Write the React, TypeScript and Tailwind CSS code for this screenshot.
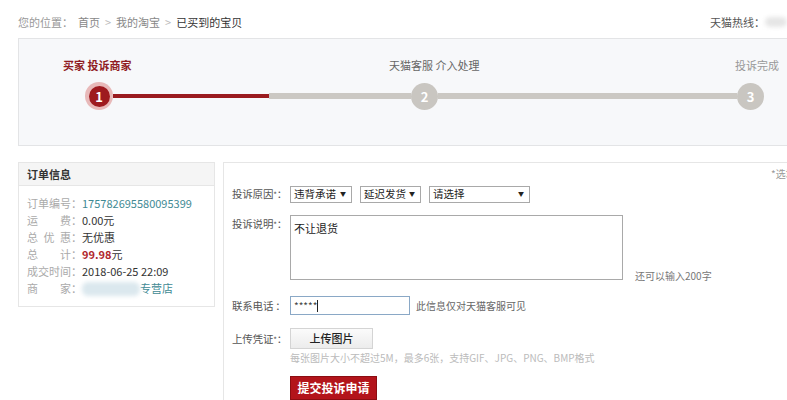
import { type ReactNode } from "react";

const FONT = { fontFamily: '"Noto Sans CJK SC", "Noto Sans", sans-serif' };

function Step({ n, active }: { n: number; active?: boolean }) {
  if (active) {
    return (
      <div className="size-[28px] shrink-0 rounded-full bg-[#e8b9b9] flex items-center justify-center">
        <div className="size-[21px] rounded-full bg-[#9e1a1f] text-white text-[13px] font-bold leading-none flex items-center justify-center">
          {n}
        </div>
      </div>
    );
  }
  return (
    <div className="size-[27px] shrink-0 rounded-full bg-[#c9c6c1] text-white text-[13px] font-bold leading-none flex items-center justify-center">
      {n}
    </div>
  );
}

function Select({ w, children }: { w: string; children: ReactNode }) {
  return (
    <div
      className={`${w} h-[17px] border border-[#a9a9a9] bg-white flex items-center justify-between whitespace-nowrap pl-[3px] pr-[5px] text-[10.5px] text-[#222] leading-none`}
    >
      <span>{children}</span>
      <span className="text-[6px]">▼</span>
    </div>
  );
}

function Label({ children }: { children: ReactNode }) {
  return (
    <div className="w-[58px] shrink-0 whitespace-nowrap text-[10.5px] text-[#555] leading-[17px] tracking-[-0.2px]">
      {children}
    </div>
  );
}

function InfoRow({ label, children }: { label: string; children: ReactNode }) {
  return (
    <div className="flex h-[17px] items-center text-[11px] leading-none whitespace-pre">
      <span className="w-[44px] text-[#aaa] [text-align-last:justify]">{label}</span>
      <span className="w-[11px] text-[#aaa]">：</span>
      {children}
    </div>
  );
}

export default function App() {
  return (
    <div className="w-[787px] h-[400px] overflow-hidden bg-white" style={FONT}>
      {/* breadcrumb */}
      <div className="flex items-center justify-between pl-[18px] pt-[14px] h-[30px] text-[11px] leading-none">
        <div className="flex items-center gap-[5px] text-[#888]">
          <span className="text-[#999]">您的位置：</span>
          <span>首页</span>
          <span className="text-[#bbb]">&gt;</span>
          <span>我的淘宝</span>
          <span className="text-[#bbb]">&gt;</span>
          <span className="text-[#333]">已买到的宝贝</span>
        </div>
        <div className="flex items-center text-[#555]">
          <span>天猫热线：</span>
          <span className="w-[22px] h-[10px] rounded-full bg-[#e6e6e6] blur-[2px]" />
        </div>
      </div>

      {/* progress */}
      <div className="ml-[18px] mt-[8px] w-[790px] h-[108px] border border-[#e3e4e6] bg-[#f7f8fa]">
        <div className="relative h-[43px] text-[11px] leading-none">
          <span className="absolute left-[44px] top-[21px] font-bold text-[#8f1b22]">买家 投诉商家</span>
          <span className="absolute left-[370px] top-[21px] text-[#666]">天猫客服 介入处理</span>
          <span className="absolute left-[716px] top-[21px] text-[#999]">投诉完成</span>
        </div>
        <div className="flex items-center pl-[66px]">
          <Step n={1} active />
          <div className="w-[156px] h-[4px] bg-[#9a1b1f]" />
          <div className="w-[142px] h-[6px] bg-[#cbc8c3]" />
          <Step n={2} />
          <div className="w-[299px] h-[6px] bg-[#cbc8c3]" />
          <Step n={3} />
        </div>
      </div>

      {/* bottom */}
      <div className="flex mt-[16px] pl-[18px] gap-[8px]">
        {/* order info */}
        <div className="w-[197px] h-[145px] shrink-0 border border-[#e6e6e6] bg-white self-start">
          <div className="h-[23px] bg-[#f5f5f5] border-b border-[#e6e6e6] pl-[8px] flex items-center text-[11px] font-bold text-[#333]">
            订单信息
          </div>
          <div className="pl-[8px] pt-[9px]">
            <InfoRow label="订单编号">
              <span className="text-[#3f8a94]">175782695580095399</span>
            </InfoRow>
            <InfoRow label="运费">
              <span className="text-[#333]">0.00元</span>
            </InfoRow>
            <InfoRow label="总优惠">
              <span className="text-[#333]">无优惠</span>
            </InfoRow>
            <InfoRow label="总计">
              <span className="font-bold text-[#b0252c]">99.98</span>
              <span className="text-[#333]">元</span>
            </InfoRow>
            <InfoRow label="成交时间">
              <span className="text-[#333]">2018-06-25 22:09</span>
            </InfoRow>
            <InfoRow label="商家">
              <span className="w-[58px] h-[14px] rounded-[6px] bg-[#dbe8ee] blur-[2px]" />
              <span className="text-[#3f8a94]">专营店</span>
            </InfoRow>
          </div>
        </div>

        {/* form */}
        <div className="flex-1 min-w-0 border-l border-t border-[#e6e6e6] pl-[8px] h-[260px]">
          <div className="h-[22px] pl-[539px] whitespace-nowrap text-[10px] text-[#999] leading-none pt-[6px]">
            *选填项
          </div>
          <div className="flex items-center">
            <Label>
              投诉原因<span className="text-[8px]">*</span>：
            </Label>
            <div className="flex gap-[8px]">
              <Select w="w-[62px]">违背承诺</Select>
              <Select w="w-[61px]">延迟发货</Select>
              <Select w="w-[101px]">请选择</Select>
            </div>
          </div>
          <div className="flex mt-[12px] items-start">
            <Label>
              投诉说明<span className="text-[8px]">*</span>：
            </Label>
            <div className="w-[333px] h-[65px] border border-[#a9a9a9] px-[3px] pt-[5px] text-[11px] text-[#222] leading-[14px]">
              不让退货
            </div>
            <span className="self-end ml-[12px] text-[10px] text-[#777] leading-none mb-[-1px]">还可以输入200字</span>
          </div>
          <div className="flex items-center mt-[16px]">
            <Label>联系电话 ：</Label>
            <div className="w-[120px] h-[19px] border border-[#8aa8c6] bg-white flex items-center pl-[3px] text-[10px] text-[#444] leading-none">
              *****<span className="w-px h-[12px] bg-[#222]" />
            </div>
            <span className="ml-[6px] text-[10px] text-[#666]">此信息仅对天猫客服可见</span>
          </div>
          <div className="flex items-center mt-[13px]">
            <Label>
              上传凭证<span className="text-[8px]">*</span>：
            </Label>
            <div className="w-[83px] h-[21px] border border-[#d4d4d4] bg-gradient-to-b from-[#fbfbfb] to-[#ececec] flex items-center justify-center text-[11px] font-medium text-[#222]">
              上传图片
            </div>
          </div>
          <div className="ml-[58px] mt-[2px] text-[10px] leading-[14px] text-[#bbb]">
            每张图片大小不超过5M，最多6张，支持GIF、JPG、PNG、BMP格式
          </div>
          <div className="ml-[58px] mt-[11px] w-[87px] h-[24px] bg-[#b3141b] border border-[#8c0d12] flex items-center justify-center text-[12px] font-bold text-white">
            提交投诉申请
          </div>
        </div>
      </div>
    </div>
  );
}
